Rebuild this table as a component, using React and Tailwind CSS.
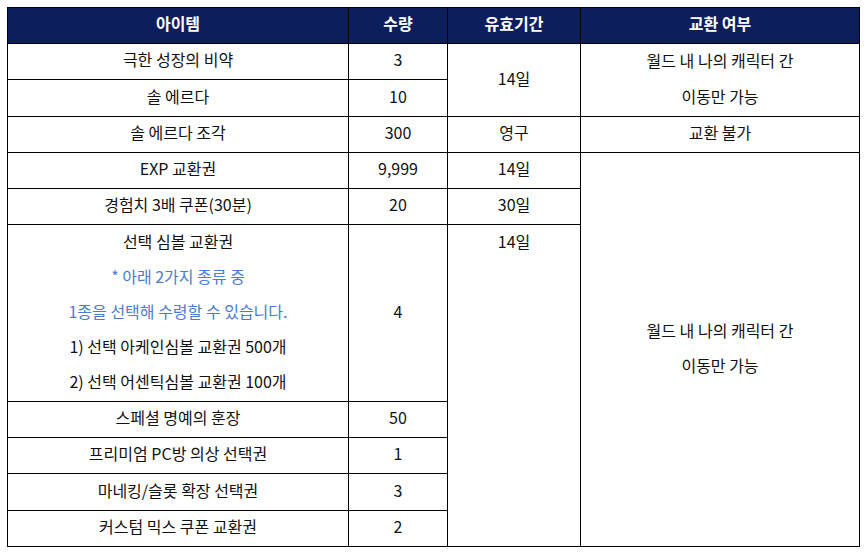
import React from 'react';

const cell = 'border border-black text-center align-middle p-0';
const blue = 'text-[#4a7cd0]';

// cell content, nudged up a little so the glyphs sit where the reference has them
function C({ children }) {
  return <div className="-mt-[4px]">{children}</div>;
}

export default function App() {
  return (
    <div
      className="w-[866px] h-[558px] bg-white pt-[7px] pl-[7px]"
      style={{ fontFamily: '"Noto Sans CJK KR", "Noto Sans", sans-serif' }}
    >
      <table className="border-collapse table-fixed w-[852px] text-[16px] text-[#111] leading-[35px]">
        <colgroup>
          <col className="w-[341px]" />
          <col className="w-[99px]" />
          <col className="w-[133px]" />
          <col className="w-[279px]" />
        </colgroup>
        <thead>
          <tr className="h-[36px] bg-[#0c1f5c] text-white font-bold">
            <th className={cell}><C>아이템</C></th>
            <th className={cell}><C>수량</C></th>
            <th className={cell}><C>유효기간</C></th>
            <th className={cell}><C>교환 여부</C></th>
          </tr>
        </thead>
        <tbody>
          <tr className="h-[36px]">
            <td className={cell}><C>극한 성장의 비약</C></td>
            <td className={cell}><C>3</C></td>
            <td className={cell} rowSpan={2}><C>14일</C></td>
            <td className={cell} rowSpan={2}>
              <C>
                <div className="leading-[36px]">월드 내 나의 캐릭터 간</div>
                <div className="leading-[36px]">이동만 가능</div>
              </C>
            </td>
          </tr>
          <tr className="h-[37px]">
            <td className={cell}><C>솔 에르다</C></td>
            <td className={cell}><C>10</C></td>
          </tr>
          <tr className="h-[36px]">
            <td className={cell}><C>솔 에르다 조각</C></td>
            <td className={cell}><C>300</C></td>
            <td className={cell}><C>영구</C></td>
            <td className={cell}><C>교환 불가</C></td>
          </tr>
          <tr className="h-[36px]">
            <td className={cell}><C>EXP 교환권</C></td>
            <td className={cell}><C>9,999</C></td>
            <td className={cell}><C>14일</C></td>
            <td className={cell} rowSpan={8}>
              <C>
                <div>월드 내 나의 캐릭터 간</div>
                <div>이동만 가능</div>
              </C>
            </td>
          </tr>
          <tr className="h-[36px]">
            <td className={cell}><C>경험치 3배 쿠폰(30분)</C></td>
            <td className={cell}><C>20</C></td>
            <td className={cell}><C>30일</C></td>
          </tr>
          <tr className="h-[177px]">
            <td className={cell}>
              <C>
                <div>선택 심볼 교환권</div>
                <div className={blue}>* 아래 2가지 종류 중</div>
                <div className={blue}>1종을 선택해 수령할 수 있습니다.</div>
                <div>1) 선택 아케인심볼 교환권 500개</div>
                <div>2) 선택 어센틱심볼 교환권 100개</div>
              </C>
            </td>
            <td className={cell}><C>4</C></td>
            <td className={`${cell} !align-top`} rowSpan={5}>
              <div className="-mt-px">14일</div>
            </td>
          </tr>
          <tr className="h-[36px]">
            <td className={cell}><C>스페셜 명예의 훈장</C></td>
            <td className={cell}><C>50</C></td>
          </tr>
          <tr className="h-[36px]">
            <td className={cell}><C>프리미엄 PC방 의상 선택권</C></td>
            <td className={cell}><C>1</C></td>
          </tr>
          <tr className="h-[37px]">
            <td className={cell}><C>마네킹/슬롯 확장 선택권</C></td>
            <td className={cell}><C>3</C></td>
          </tr>
          <tr className="h-[36px]">
            <td className={cell}><C>커스텀 믹스 쿠폰 교환권</C></td>
            <td className={cell}><C>2</C></td>
          </tr>
        </tbody>
      </table>
    </div>
  );
}
